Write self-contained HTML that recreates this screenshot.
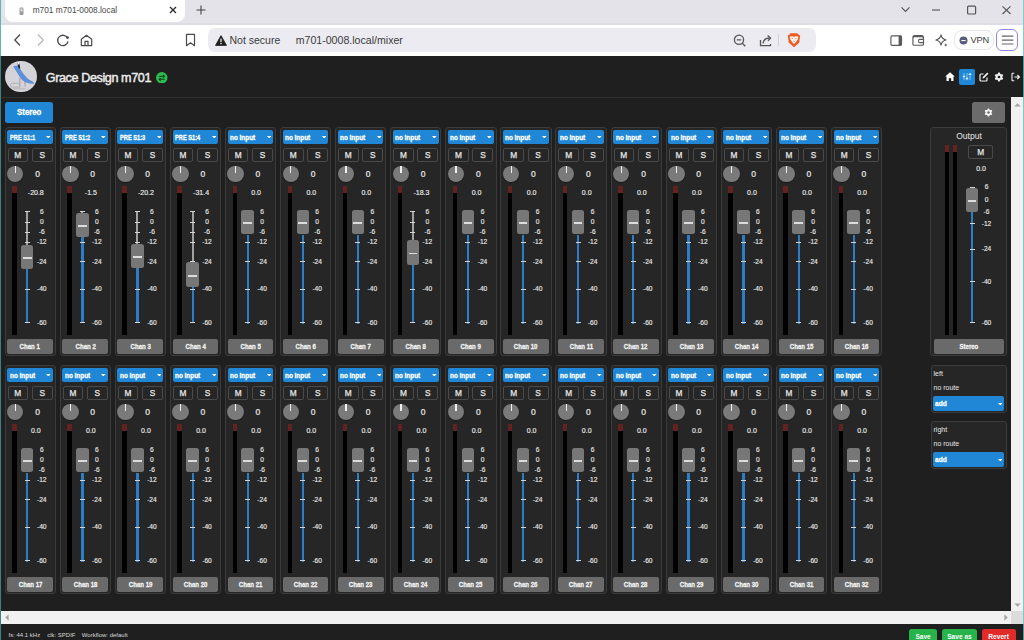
<!DOCTYPE html>
<html><head><meta charset="utf-8">
<style>
*{box-sizing:border-box;margin:0;padding:0}
html,body{width:1024px;height:640px;overflow:hidden;background:#1f1f1f;font-family:"Liberation Sans",sans-serif}
.a{position:absolute}
#tabbar{position:absolute;left:0;top:0;width:1024px;height:24.5px;background:#e4e3e9;border-bottom:2.2px solid #dedde3}
#toolbar{position:absolute;left:0;top:24.5px;width:1024px;height:31.5px;background:#fff}
#tab{position:absolute;left:5px;top:-8px;width:179.5px;height:30.4px;background:#fff;border-radius:8px}
#page{position:absolute;left:1px;top:56px;width:1022px;height:584px;background:#1f1f1f}
.edge{position:absolute;top:0;width:1px;height:640px;background:#3c8081}
.st{position:absolute;width:51.3px;height:229.2px;border:1px solid #3b3b3b;border-radius:3px;background:#262626}
.sel{position:absolute;width:45.6px;height:14.5px;background:#1f87d6;border-radius:2px;color:#fff;font-weight:bold;font-size:7px;line-height:15.6px;padding-left:2.3px;white-space:nowrap}
.sel .car{position:absolute;right:1.9px;top:6.4px}
.ms{position:absolute;width:20.5px;height:13.5px;border:1px solid #4a4a4a;border-radius:2px;color:#e8e8e8;font-size:8.3px;line-height:12.6px;text-align:center;-webkit-text-stroke:0.25px #e8e8e8}
.kn{position:absolute;width:16.4px;height:16.4px;border-radius:50%;background:#7a7a7a;box-shadow:0 0.5px 1px rgba(0,0,0,0.6)}
.kn i{position:absolute;left:7.6px;top:0.3px;width:1.3px;height:7.5px;background:#f0f0f0}
.v0{position:absolute;width:20px;text-align:center;color:#ececec;font-size:8.5px;line-height:10px;-webkit-text-stroke:0.2px #ececec}
.vv{position:absolute;width:30px;text-align:center;color:#ececec;font-size:7px;line-height:9px;-webkit-text-stroke:0.15px #ececec}
.mt{position:absolute;width:4.4px;height:148.9px;background:linear-gradient(#622222 0,#622222 7.2px,#000 7.2px)}
.tg{position:absolute;width:2px;background:#a2a2a2}
.tb{position:absolute;width:2.2px;background:#2a7dc6}
.tk{position:absolute;width:5px;height:1.1px;background:#d4d4d4}
.lb{position:absolute;width:20px;text-align:center;color:#e8e8e8;font-size:6.6px;line-height:9px;-webkit-text-stroke:0.15px #e8e8e8}
.hd{position:absolute;width:12.4px;height:24.4px;border-radius:2.5px;background:#777}
.hd i{position:absolute;left:1.9px;top:12.3px;width:8.6px;height:1.8px;background:#dcdcdc}
.nm{position:absolute;width:45.75px;height:14.8px;border-radius:2px;background:#6a6a6a;color:#f2f2f2;font-weight:bold;font-size:7px;line-height:15.6px;text-align:center}
.nm span{display:inline-block;transform:scaleX(0.865);-webkit-text-stroke:0.3px #f2f2f2}
.sel span{display:inline-block;transform-origin:0 50%;transform:scaleX(0.913);-webkit-text-stroke:0.3px #fff}
.sel span.pre{transform:scaleX(0.81)}
.otl{position:absolute;left:945px;top:131px;width:48px;text-align:center;color:#e6e6e6;font-size:8.5px;line-height:10px}
.rt{position:absolute;color:#e6e6e6;font-size:7px;line-height:10px}
.ft{position:absolute;top:631px;color:#d8d8d8;font-size:6px;line-height:8px;white-space:nowrap}
.btn{position:absolute;top:628.5px;height:16px;border-radius:2.5px;color:#fff;font-weight:bold;font-size:6.6px;line-height:15px;text-align:center}
</style></head><body>
<div id="tabbar"></div>
<div id="tab"></div>
<svg class="a" style="left:18px;top:7px" width="7" height="9" viewBox="0 0 7 9"><rect x="1.5" y="0.5" width="4" height="7.5" rx="1.2" fill="#9a9a9a"/><rect x="2.3" y="1.5" width="2.4" height="3" fill="#d6d6d6"/></svg>
<div class="a" style="left:32.7px;top:4.3px;font-size:8.3px;line-height:12px;color:#474747;white-space:nowrap">m701 m701-0008.local</div>
<svg class="a" style="left:169px;top:6px" width="8" height="8" viewBox="0 0 8 8"><path d="M1 1L7 7M7 1L1 7" stroke="#2a2a2a" stroke-width="1.3"/></svg>
<svg class="a" style="left:196px;top:5px" width="10" height="10" viewBox="0 0 10 10"><path d="M5 0.5V9.5M0.5 5H9.5" stroke="#444" stroke-width="1.1"/></svg>
<svg class="a" style="left:900px;top:6px" width="11" height="7" viewBox="0 0 11 7"><path d="M1.5 1.3L5.5 5.3L9.5 1.3" stroke="#555" stroke-width="1.2" fill="none"/></svg>
<svg class="a" style="left:931px;top:9px" width="10" height="2" viewBox="0 0 10 2"><path d="M1 1H9" stroke="#555" stroke-width="1.1"/></svg>
<svg class="a" style="left:966px;top:5px" width="11" height="10" viewBox="0 0 11 10"><rect x="1.6" y="1.2" width="8" height="7.8" rx="1" stroke="#555" stroke-width="1.2" fill="none"/></svg>
<svg class="a" style="left:1001px;top:5px" width="11" height="10" viewBox="0 0 11 10"><path d="M1.5 1.3L9.5 9M9.5 1.3L1.5 9" stroke="#555" stroke-width="1.1"/></svg>
<div id="toolbar"></div>
<svg class="a" style="left:13px;top:33px" width="9" height="14" viewBox="0 0 9 14"><path d="M7 1.5L1.8 7L7 12.5" stroke="#4a4a4a" stroke-width="1.3" fill="none"/></svg>
<svg class="a" style="left:36px;top:33px" width="9" height="14" viewBox="0 0 9 14"><path d="M2 1.5L7.2 7L2 12.5" stroke="#b8b8b8" stroke-width="1.3" fill="none"/></svg>
<svg class="a" style="left:56px;top:33px" width="14" height="14" viewBox="0 0 14 14"><path d="M11.6 5.2A5.2 5.2 0 1 0 12 8.5" stroke="#4a4a4a" stroke-width="1.3" fill="none"/><circle cx="11.5" cy="4.6" r="1.4" fill="#4a4a4a"/></svg>
<svg class="a" style="left:80px;top:34px" width="13" height="13" viewBox="0 0 13 13"><path d="M1.3 11.6V5.3L6.5 1.3L11.7 5.3V11.6H1.3Z M5 11.6V7.3H8V11.6" stroke="#4a4a4a" stroke-width="1.2" fill="none" stroke-linejoin="round"/></svg>
<svg class="a" style="left:185px;top:33px" width="11" height="14" viewBox="0 0 11 14"><path d="M1.5 1.3H9.5V12.7L5.5 9.8L1.5 12.7Z" stroke="#4a4a4a" stroke-width="1.2" fill="none" stroke-linejoin="round"/></svg>
<div class="a" style="left:208.3px;top:28px;width:607.5px;height:24px;border-radius:7px;background:#ecebf2"></div>
<svg class="a" style="left:215px;top:35px" width="12" height="11" viewBox="0 0 12 11"><path d="M6 0.6L11.5 10.4H0.5Z" fill="#202020" stroke="#202020" stroke-width="0.8" stroke-linejoin="round"/><rect x="5.4" y="3.6" width="1.2" height="3.6" fill="#fff"/><rect x="5.4" y="8" width="1.2" height="1.2" fill="#fff"/></svg>
<div class="a" style="left:229.5px;top:33px;font-size:10.5px;line-height:14px;color:#3a3a3a;white-space:nowrap">Not secure</div>
<div class="a" style="left:295.7px;top:33px;font-size:10.6px;line-height:14px;color:#3a3a3a;white-space:nowrap">m701-0008.local/mixer</div>
<svg class="a" style="left:733px;top:34px" width="14" height="14" viewBox="0 0 14 14"><circle cx="6" cy="5.8" r="4.6" stroke="#555" stroke-width="1.3" fill="none"/><path d="M3.8 5.8H8.2M9.3 9.2L12.3 12.2" stroke="#555" stroke-width="1.3"/></svg>
<svg class="a" style="left:759px;top:34px" width="14" height="13" viewBox="0 0 14 13"><path d="M1.5 6V11.7H11.5V10" stroke="#555" stroke-width="1.3" fill="none" stroke-linejoin="round"/><path d="M4 9.5C4.5 6 7 4 10.5 4" stroke="#555" stroke-width="1.3" fill="none"/><path d="M8.6 1.5L11.6 4L9 6.8" stroke="#555" stroke-width="1.3" fill="none" stroke-linejoin="round"/></svg>
<div class="a" style="left:778px;top:34.3px;width:1px;height:11.7px;background:#cfcfd6"></div>
<svg class="a" style="left:786.5px;top:33px" width="14" height="15" viewBox="0 0 14 15"><path d="M3.3 0.3H10.3L11.8 1.8L13.2 2.6L12.9 4.2L12.3 9.6L7 14.2L1.7 9.6L1.1 4.2L0.8 2.6L2.2 1.8Z" fill="#ef5a1f"/><path d="M2.6 3.6L5 3.2L7 3.8L9 3.2L11.4 3.6L10.6 6.8L8.5 9.6L7 10.9L5.5 9.6L3.4 6.8Z" fill="#fdf3ec"/><path d="M4.6 5.2L6 5.6M9.4 5.2L8 5.6M6.2 8L7 8.6L7.8 8" stroke="#ef7a4a" stroke-width="0.7" fill="none"/></svg>
<svg class="a" style="left:888.5px;top:33.5px" width="14" height="13" viewBox="0 0 14 13"><rect x="1.9" y="1.8" width="10.6" height="9.6" rx="1.2" stroke="#5a5a5a" stroke-width="1.15" fill="none"/><rect x="9.6" y="1.8" width="2.9" height="9.6" fill="#5a5a5a"/></svg>
<svg class="a" style="left:911px;top:33.5px" width="14" height="13" viewBox="0 0 14 13"><path d="M2.2 3.6V2.9C2.2 2.2 2.7 1.8 3.3 1.8H11C11.7 1.8 12.1 2.3 12.1 2.9V3.6" stroke="#5a5a5a" stroke-width="1.4" fill="none"/><rect x="1.9" y="2.6" width="10.6" height="8.6" rx="1.3" stroke="#5a5a5a" stroke-width="1.15" fill="none"/><path d="M12.5 5.4H8.8C8 5.4 7.6 5.9 7.6 6.6V7.4C7.6 8.1 8 8.6 8.8 8.6H12.5" stroke="#5a5a5a" stroke-width="1.1" fill="none"/></svg>
<svg class="a" style="left:935px;top:33.5px" width="13" height="13" viewBox="0 0 13 13"><path d="M6 0.9Q6.9 5.1 11.1 6Q6.9 6.9 6 11.1Q5.1 6.9 0.9 6Q5.1 5.1 6 0.9Z" stroke="#555" stroke-width="1.1" fill="none" stroke-linejoin="round"/><path d="M10.8 9.2L11.4 10.4L12.6 11L11.4 11.6L10.8 12.8L10.2 11.6L9 11L10.2 10.4Z" fill="#555"/></svg>
<div class="a" style="left:953.8px;top:29.5px;width:40.2px;height:20.4px;border:1px solid #e6e6ea;border-radius:8px;background:#fff"></div>
<svg class="a" style="left:959px;top:35.5px" width="9" height="9" viewBox="0 0 9 9"><circle cx="4.5" cy="4.5" r="4" fill="#575d7b"/><rect x="2.4" y="4" width="4.2" height="1.1" fill="#fff"/></svg>
<div class="a" style="left:970.5px;top:34px;font-size:9.3px;line-height:12px;color:#3a3a3a;letter-spacing:-0.2px">VPN</div>
<div class="a" style="left:996px;top:28.5px;width:21.6px;height:22.1px;border:1.5px solid #8d86e6;border-radius:6px;background:#fff"></div>
<svg class="a" style="left:1000.5px;top:35px" width="13" height="10" viewBox="0 0 13 10"><path d="M0.8 1.1H12.4M0.8 5.1H12.4M0.8 9H12.4" stroke="#666" stroke-width="1.1"/></svg>

<div id="page"></div>
<!-- header -->
<div class="a" style="left:5px;top:60.8px;width:31.5px;height:31.5px;border-radius:50%;background:#d4d4d8;overflow:hidden">
<svg width="31.5" height="31.5" viewBox="0 0 31.5 31.5"><path d="M8 5.3L12.8 4.5L14.9 7.2L17.1 10.9L20.3 15.1L23.4 18.3L27.7 20.5L29.3 22L28.8 22.8L24.5 22.6L20.3 21.3L17.1 18.9L14.9 16.2L12.3 12L9.6 7.7Z" fill="#5d8fda"/><path d="M12.6 2.3L14.6 2.4L15.2 7.4L13.8 7.6L13 5.2Z" fill="#1b2638"/><path d="M12.8 1.5L14.5 1.6L14.4 3.4L13 3.4Z" fill="#f4f4f4"/><path d="M14.9 17L14.9 25.6M19.8 20.5L20.2 25.6" stroke="#8e8e94" stroke-width="0.8" fill="none"/><path d="M14.5 22.3H7C6 22.3 5.5 23 5.5 24.2C5.5 25.4 6 26.1 7 26.1H15.5" stroke="#a0a0a6" stroke-width="0.7" fill="none"/><path d="M7.5 27.8H20.5" stroke="#a8a8ae" stroke-width="0.7"/></svg>
</div>
<div class="a" style="left:45.8px;top:71px;font-size:12.6px;line-height:15px;font-weight:normal;color:#ececec;letter-spacing:-0.4px;white-space:nowrap;-webkit-text-stroke:0.45px #ececec">Grace Design m701</div>
<svg class="a" style="left:156.3px;top:71.8px" width="11.6" height="11.6" viewBox="0 0 12.4 12.4"><circle cx="6.2" cy="6.2" r="6.1" fill="#2cbd4e"/><path d="M3 4.6H9M7.4 3L9 4.6L7.4 6.2M9.4 7.8H3.4M5 6.2L3.4 7.8L5 9.4" stroke="#0f3d1c" stroke-width="1.1" fill="none"/></svg>
<svg class="a" style="left:944.7px;top:72px" width="10" height="9.2" viewBox="0 0 10 9.2"><path d="M5 0.3L9.8 4.6H8.5V9H6.2V6.3H3.8V9H1.5V4.6H0.2Z" fill="#fff"/></svg>
<div class="a" style="left:958.9px;top:68.6px;width:16.4px;height:16.4px;border-radius:2px;background:#1f87d6"></div>
<svg class="a" style="left:962px;top:72px" width="10" height="10" viewBox="0 0 10 10"><path d="M2 1V8.2M5 1V8.2M8 1V8.2" stroke="#9fd0f5" stroke-width="1" opacity="0.8"/><rect x="0.7" y="3.8" width="2.6" height="1.5" rx="0.6" fill="#d8f0ff"/><rect x="3.7" y="5.8" width="2.6" height="1.5" rx="0.6" fill="#d8f0ff"/><rect x="6.7" y="1.5" width="2.6" height="1.5" rx="0.6" fill="#d8f0ff"/></svg>
<svg class="a" style="left:978.5px;top:71.5px" width="10" height="10" viewBox="0 0 10 10"><path d="M4.5 2H2C1.4 2 1 2.4 1 3V8C1 8.6 1.4 9 2 9H7C7.6 9 8 8.6 8 8V5.5" stroke="#f0f0f0" stroke-width="1.2" fill="none"/><path d="M8.2 0.6L9.4 1.8L5 6.2L3.5 6.5L3.8 5Z" fill="#f0f0f0"/></svg>
<svg class="a" style="left:994.3px;top:71.7px" width="10" height="10" viewBox="0 0 10 10"><path d="M3.45 2.32L4.30 0.56L5.70 0.56L6.55 2.32L8.50 2.17L9.20 3.39L8.10 5.00L9.20 6.61L8.50 7.83L6.55 7.68L5.70 9.44L4.30 9.44L3.45 7.68L1.50 7.83L0.80 6.61L1.90 5.00L0.80 3.39L1.50 2.17Z" fill="#f0f0f0"/><circle cx="5" cy="5" r="1.35" fill="#1f1f1f"/></svg>
<svg class="a" style="left:1011.2px;top:72px" width="10" height="10" viewBox="0 0 10 10"><path d="M3.3 1.2H1.6C1.2 1.2 1 1.5 1 1.8V8.2C1 8.5 1.2 8.8 1.6 8.8H3.3" stroke="#f0f0f0" stroke-width="1.1" fill="none"/><path d="M3.4 5H8.3M6.3 3L8.4 5L6.3 7" stroke="#f0f0f0" stroke-width="1.2" fill="none"/></svg>
<div class="a" style="left:1px;top:97.2px;width:1010px;height:1px;background:#2e3030"></div>
<div class="a" style="left:5px;top:101.5px;width:48.2px;height:21.3px;border-radius:2.5px;background:#1f87d6;color:#fff;font-weight:bold;font-size:8.5px;line-height:21.3px;text-align:center"><span style="display:inline-block;transform:scaleX(0.92);-webkit-text-stroke:0.3px #fff">Stereo</span></div>
<div class="a" style="left:972.2px;top:101.6px;width:32.6px;height:21.2px;border-radius:2.5px;background:#6b6b6b"></div>
<svg class="a" style="left:984px;top:107.5px" width="9" height="9" viewBox="0 0 10 10"><path d="M3.45 2.32L4.30 0.56L5.70 0.56L6.55 2.32L8.50 2.17L9.20 3.39L8.10 5.00L9.20 6.61L8.50 7.83L6.55 7.68L5.70 9.44L4.30 9.44L3.45 7.68L1.50 7.83L0.80 6.61L1.90 5.00L0.80 3.39L1.50 2.17Z" fill="#f4f4f4"/><circle cx="5" cy="5" r="1.35" fill="#6b6b6b"/></svg>
<div class="st" style="left:4.55px;top:127.3px"></div>
<div class="sel" style="left:7.3px;top:129.5px"><span class="pre">PRE S1:1</span><svg class="car" width="4.6" height="2.6" viewBox="0 0 4.6 2.6"><path d="M0 0.1H4.6L2.3 2.5Z" fill="#fff"/></svg></div>
<div class="ms" style="left:7.55px;top:148px">M</div>
<div class="ms" style="left:31.75px;top:148px;width:21px">S</div>
<div class="kn" style="left:7.1px;top:165.7px"><i></i></div>
<div class="v0" style="left:27.55px;top:168.7px">0</div>
<div class="mt" style="left:12.15px;top:185.8px"></div>
<div class="vv" style="left:20.8px;top:188.1px">-20.8</div>
<div class="tg" style="left:26.25px;top:212px;height:32.52px"></div>
<div class="tb" style="left:26.25px;top:268.92px;height:54.58px"></div>
<div class="tk" style="left:24.75px;top:211.4px"></div>
<div class="lb" style="left:31.75px;top:206.7px">6</div>
<div class="tk" style="left:24.75px;top:221.7px"></div>
<div class="lb" style="left:31.75px;top:217px">0</div>
<div class="tk" style="left:24.75px;top:231.6px"></div>
<div class="lb" style="left:31.75px;top:226.9px">-6</div>
<div class="tk" style="left:24.75px;top:241.6px"></div>
<div class="lb" style="left:31.75px;top:236.9px">-12</div>
<div class="tk" style="left:24.75px;top:261.4px"></div>
<div class="lb" style="left:31.75px;top:256.7px">-24</div>
<div class="tk" style="left:24.75px;top:288.8px"></div>
<div class="lb" style="left:31.75px;top:284.1px">-40</div>
<div class="tk" style="left:24.75px;top:322.4px"></div>
<div class="lb" style="left:31.75px;top:317.7px">-60</div>
<div class="hd" style="left:21.05px;top:244.52px"><i></i></div>
<div class="nm" style="left:7.25px;top:339.3px"><span>Chan 1</span></div>
<div class="st" style="left:59.64px;top:127.3px"></div>
<div class="sel" style="left:62.39px;top:129.5px"><span class="pre">PRE S1:2</span><svg class="car" width="4.6" height="2.6" viewBox="0 0 4.6 2.6"><path d="M0 0.1H4.6L2.3 2.5Z" fill="#fff"/></svg></div>
<div class="ms" style="left:62.64px;top:148px">M</div>
<div class="ms" style="left:86.84px;top:148px;width:21px">S</div>
<div class="kn" style="left:62.19px;top:165.7px"><i></i></div>
<div class="v0" style="left:82.64px;top:168.7px">0</div>
<div class="mt" style="left:67.24px;top:185.8px"></div>
<div class="vv" style="left:75.89px;top:188.1px">-1.5</div>
<div class="tg" style="left:81.34px;top:212px;height:0.58px"></div>
<div class="tb" style="left:81.34px;top:236.97px;height:86.53px"></div>
<div class="tk" style="left:79.84px;top:211.4px"></div>
<div class="lb" style="left:86.84px;top:206.7px">6</div>
<div class="tk" style="left:79.84px;top:221.7px"></div>
<div class="lb" style="left:86.84px;top:217px">0</div>
<div class="tk" style="left:79.84px;top:231.6px"></div>
<div class="lb" style="left:86.84px;top:226.9px">-6</div>
<div class="tk" style="left:79.84px;top:241.6px"></div>
<div class="lb" style="left:86.84px;top:236.9px">-12</div>
<div class="tk" style="left:79.84px;top:261.4px"></div>
<div class="lb" style="left:86.84px;top:256.7px">-24</div>
<div class="tk" style="left:79.84px;top:288.8px"></div>
<div class="lb" style="left:86.84px;top:284.1px">-40</div>
<div class="tk" style="left:79.84px;top:322.4px"></div>
<div class="lb" style="left:86.84px;top:317.7px">-60</div>
<div class="hd" style="left:76.14px;top:212.58px"><i></i></div>
<div class="nm" style="left:62.34px;top:339.3px"><span>Chan 2</span></div>
<div class="st" style="left:114.73px;top:127.3px"></div>
<div class="sel" style="left:117.48px;top:129.5px"><span class="pre">PRE S1:3</span><svg class="car" width="4.6" height="2.6" viewBox="0 0 4.6 2.6"><path d="M0 0.1H4.6L2.3 2.5Z" fill="#fff"/></svg></div>
<div class="ms" style="left:117.73px;top:148px">M</div>
<div class="ms" style="left:141.93px;top:148px;width:21px">S</div>
<div class="kn" style="left:117.28px;top:165.7px"><i></i></div>
<div class="v0" style="left:137.73px;top:168.7px">0</div>
<div class="mt" style="left:122.33px;top:185.8px"></div>
<div class="vv" style="left:130.98px;top:188.1px">-20.2</div>
<div class="tg" style="left:136.43px;top:212px;height:31.53px"></div>
<div class="tb" style="left:136.43px;top:267.93px;height:55.57px"></div>
<div class="tk" style="left:134.93px;top:211.4px"></div>
<div class="lb" style="left:141.93px;top:206.7px">6</div>
<div class="tk" style="left:134.93px;top:221.7px"></div>
<div class="lb" style="left:141.93px;top:217px">0</div>
<div class="tk" style="left:134.93px;top:231.6px"></div>
<div class="lb" style="left:141.93px;top:226.9px">-6</div>
<div class="tk" style="left:134.93px;top:241.6px"></div>
<div class="lb" style="left:141.93px;top:236.9px">-12</div>
<div class="tk" style="left:134.93px;top:261.4px"></div>
<div class="lb" style="left:141.93px;top:256.7px">-24</div>
<div class="tk" style="left:134.93px;top:288.8px"></div>
<div class="lb" style="left:141.93px;top:284.1px">-40</div>
<div class="tk" style="left:134.93px;top:322.4px"></div>
<div class="lb" style="left:141.93px;top:317.7px">-60</div>
<div class="hd" style="left:131.23px;top:243.53px"><i></i></div>
<div class="nm" style="left:117.43px;top:339.3px"><span>Chan 3</span></div>
<div class="st" style="left:169.82px;top:127.3px"></div>
<div class="sel" style="left:172.57px;top:129.5px"><span class="pre">PRE S1:4</span><svg class="car" width="4.6" height="2.6" viewBox="0 0 4.6 2.6"><path d="M0 0.1H4.6L2.3 2.5Z" fill="#fff"/></svg></div>
<div class="ms" style="left:172.82px;top:148px">M</div>
<div class="ms" style="left:197.02px;top:148px;width:21px">S</div>
<div class="kn" style="left:172.37px;top:165.7px"><i></i></div>
<div class="v0" style="left:192.82px;top:168.7px">0</div>
<div class="mt" style="left:177.42px;top:185.8px"></div>
<div class="vv" style="left:186.07px;top:188.1px">-31.4</div>
<div class="tg" style="left:191.52px;top:212px;height:50.47px"></div>
<div class="tb" style="left:191.52px;top:286.87px;height:36.63px"></div>
<div class="tk" style="left:190.02px;top:211.4px"></div>
<div class="lb" style="left:197.02px;top:206.7px">6</div>
<div class="tk" style="left:190.02px;top:221.7px"></div>
<div class="lb" style="left:197.02px;top:217px">0</div>
<div class="tk" style="left:190.02px;top:231.6px"></div>
<div class="lb" style="left:197.02px;top:226.9px">-6</div>
<div class="tk" style="left:190.02px;top:241.6px"></div>
<div class="lb" style="left:197.02px;top:236.9px">-12</div>
<div class="tk" style="left:190.02px;top:261.4px"></div>
<div class="lb" style="left:197.02px;top:256.7px">-24</div>
<div class="tk" style="left:190.02px;top:288.8px"></div>
<div class="lb" style="left:197.02px;top:284.1px">-40</div>
<div class="tk" style="left:190.02px;top:322.4px"></div>
<div class="lb" style="left:197.02px;top:317.7px">-60</div>
<div class="hd" style="left:186.32px;top:262.47px"><i></i></div>
<div class="nm" style="left:172.52px;top:339.3px"><span>Chan 4</span></div>
<div class="st" style="left:224.91px;top:127.3px"></div>
<div class="sel" style="left:227.66px;top:129.5px"><span>no input</span><svg class="car" width="4.6" height="2.6" viewBox="0 0 4.6 2.6"><path d="M0 0.1H4.6L2.3 2.5Z" fill="#fff"/></svg></div>
<div class="ms" style="left:227.91px;top:148px">M</div>
<div class="ms" style="left:252.11px;top:148px;width:21px">S</div>
<div class="kn" style="left:227.46px;top:165.7px"><i></i></div>
<div class="v0" style="left:247.91px;top:168.7px">0</div>
<div class="mt" style="left:232.51px;top:185.8px"></div>
<div class="vv" style="left:241.16px;top:188.1px">0.0</div>
<div class="tb" style="left:246.61px;top:234.5px;height:89px"></div>
<div class="tk" style="left:245.11px;top:211.4px"></div>
<div class="lb" style="left:252.11px;top:206.7px">6</div>
<div class="tk" style="left:245.11px;top:221.7px"></div>
<div class="lb" style="left:252.11px;top:217px">0</div>
<div class="tk" style="left:245.11px;top:231.6px"></div>
<div class="lb" style="left:252.11px;top:226.9px">-6</div>
<div class="tk" style="left:245.11px;top:241.6px"></div>
<div class="lb" style="left:252.11px;top:236.9px">-12</div>
<div class="tk" style="left:245.11px;top:261.4px"></div>
<div class="lb" style="left:252.11px;top:256.7px">-24</div>
<div class="tk" style="left:245.11px;top:288.8px"></div>
<div class="lb" style="left:252.11px;top:284.1px">-40</div>
<div class="tk" style="left:245.11px;top:322.4px"></div>
<div class="lb" style="left:252.11px;top:317.7px">-60</div>
<div class="hd" style="left:241.41px;top:210.1px"><i></i></div>
<div class="nm" style="left:227.61px;top:339.3px"><span>Chan 5</span></div>
<div class="st" style="left:280px;top:127.3px"></div>
<div class="sel" style="left:282.75px;top:129.5px"><span>no input</span><svg class="car" width="4.6" height="2.6" viewBox="0 0 4.6 2.6"><path d="M0 0.1H4.6L2.3 2.5Z" fill="#fff"/></svg></div>
<div class="ms" style="left:283px;top:148px">M</div>
<div class="ms" style="left:307.2px;top:148px;width:21px">S</div>
<div class="kn" style="left:282.55px;top:165.7px"><i></i></div>
<div class="v0" style="left:303px;top:168.7px">0</div>
<div class="mt" style="left:287.6px;top:185.8px"></div>
<div class="vv" style="left:296.25px;top:188.1px">0.0</div>
<div class="tb" style="left:301.7px;top:234.5px;height:89px"></div>
<div class="tk" style="left:300.2px;top:211.4px"></div>
<div class="lb" style="left:307.2px;top:206.7px">6</div>
<div class="tk" style="left:300.2px;top:221.7px"></div>
<div class="lb" style="left:307.2px;top:217px">0</div>
<div class="tk" style="left:300.2px;top:231.6px"></div>
<div class="lb" style="left:307.2px;top:226.9px">-6</div>
<div class="tk" style="left:300.2px;top:241.6px"></div>
<div class="lb" style="left:307.2px;top:236.9px">-12</div>
<div class="tk" style="left:300.2px;top:261.4px"></div>
<div class="lb" style="left:307.2px;top:256.7px">-24</div>
<div class="tk" style="left:300.2px;top:288.8px"></div>
<div class="lb" style="left:307.2px;top:284.1px">-40</div>
<div class="tk" style="left:300.2px;top:322.4px"></div>
<div class="lb" style="left:307.2px;top:317.7px">-60</div>
<div class="hd" style="left:296.5px;top:210.1px"><i></i></div>
<div class="nm" style="left:282.7px;top:339.3px"><span>Chan 6</span></div>
<div class="st" style="left:335.09px;top:127.3px"></div>
<div class="sel" style="left:337.84px;top:129.5px"><span>no input</span><svg class="car" width="4.6" height="2.6" viewBox="0 0 4.6 2.6"><path d="M0 0.1H4.6L2.3 2.5Z" fill="#fff"/></svg></div>
<div class="ms" style="left:338.09px;top:148px">M</div>
<div class="ms" style="left:362.29px;top:148px;width:21px">S</div>
<div class="kn" style="left:337.64px;top:165.7px"><i></i></div>
<div class="v0" style="left:358.09px;top:168.7px">0</div>
<div class="mt" style="left:342.69px;top:185.8px"></div>
<div class="vv" style="left:351.34px;top:188.1px">0.0</div>
<div class="tb" style="left:356.79px;top:234.5px;height:89px"></div>
<div class="tk" style="left:355.29px;top:211.4px"></div>
<div class="lb" style="left:362.29px;top:206.7px">6</div>
<div class="tk" style="left:355.29px;top:221.7px"></div>
<div class="lb" style="left:362.29px;top:217px">0</div>
<div class="tk" style="left:355.29px;top:231.6px"></div>
<div class="lb" style="left:362.29px;top:226.9px">-6</div>
<div class="tk" style="left:355.29px;top:241.6px"></div>
<div class="lb" style="left:362.29px;top:236.9px">-12</div>
<div class="tk" style="left:355.29px;top:261.4px"></div>
<div class="lb" style="left:362.29px;top:256.7px">-24</div>
<div class="tk" style="left:355.29px;top:288.8px"></div>
<div class="lb" style="left:362.29px;top:284.1px">-40</div>
<div class="tk" style="left:355.29px;top:322.4px"></div>
<div class="lb" style="left:362.29px;top:317.7px">-60</div>
<div class="hd" style="left:351.59px;top:210.1px"><i></i></div>
<div class="nm" style="left:337.79px;top:339.3px"><span>Chan 7</span></div>
<div class="st" style="left:390.18px;top:127.3px"></div>
<div class="sel" style="left:392.93px;top:129.5px"><span>no input</span><svg class="car" width="4.6" height="2.6" viewBox="0 0 4.6 2.6"><path d="M0 0.1H4.6L2.3 2.5Z" fill="#fff"/></svg></div>
<div class="ms" style="left:393.18px;top:148px">M</div>
<div class="ms" style="left:417.38px;top:148px;width:21px">S</div>
<div class="kn" style="left:392.73px;top:165.7px"><i></i></div>
<div class="v0" style="left:413.18px;top:168.7px">0</div>
<div class="mt" style="left:397.78px;top:185.8px"></div>
<div class="vv" style="left:406.43px;top:188.1px">-18.3</div>
<div class="tg" style="left:411.88px;top:212px;height:28.4px"></div>
<div class="tb" style="left:411.88px;top:264.8px;height:58.7px"></div>
<div class="tk" style="left:410.38px;top:211.4px"></div>
<div class="lb" style="left:417.38px;top:206.7px">6</div>
<div class="tk" style="left:410.38px;top:221.7px"></div>
<div class="lb" style="left:417.38px;top:217px">0</div>
<div class="tk" style="left:410.38px;top:231.6px"></div>
<div class="lb" style="left:417.38px;top:226.9px">-6</div>
<div class="tk" style="left:410.38px;top:241.6px"></div>
<div class="lb" style="left:417.38px;top:236.9px">-12</div>
<div class="tk" style="left:410.38px;top:261.4px"></div>
<div class="lb" style="left:417.38px;top:256.7px">-24</div>
<div class="tk" style="left:410.38px;top:288.8px"></div>
<div class="lb" style="left:417.38px;top:284.1px">-40</div>
<div class="tk" style="left:410.38px;top:322.4px"></div>
<div class="lb" style="left:417.38px;top:317.7px">-60</div>
<div class="hd" style="left:406.68px;top:240.4px"><i></i></div>
<div class="nm" style="left:392.88px;top:339.3px"><span>Chan 8</span></div>
<div class="st" style="left:445.27px;top:127.3px"></div>
<div class="sel" style="left:448.02px;top:129.5px"><span>no input</span><svg class="car" width="4.6" height="2.6" viewBox="0 0 4.6 2.6"><path d="M0 0.1H4.6L2.3 2.5Z" fill="#fff"/></svg></div>
<div class="ms" style="left:448.27px;top:148px">M</div>
<div class="ms" style="left:472.47px;top:148px;width:21px">S</div>
<div class="kn" style="left:447.82px;top:165.7px"><i></i></div>
<div class="v0" style="left:468.27px;top:168.7px">0</div>
<div class="mt" style="left:452.87px;top:185.8px"></div>
<div class="vv" style="left:461.52px;top:188.1px">0.0</div>
<div class="tb" style="left:466.97px;top:234.5px;height:89px"></div>
<div class="tk" style="left:465.47px;top:211.4px"></div>
<div class="lb" style="left:472.47px;top:206.7px">6</div>
<div class="tk" style="left:465.47px;top:221.7px"></div>
<div class="lb" style="left:472.47px;top:217px">0</div>
<div class="tk" style="left:465.47px;top:231.6px"></div>
<div class="lb" style="left:472.47px;top:226.9px">-6</div>
<div class="tk" style="left:465.47px;top:241.6px"></div>
<div class="lb" style="left:472.47px;top:236.9px">-12</div>
<div class="tk" style="left:465.47px;top:261.4px"></div>
<div class="lb" style="left:472.47px;top:256.7px">-24</div>
<div class="tk" style="left:465.47px;top:288.8px"></div>
<div class="lb" style="left:472.47px;top:284.1px">-40</div>
<div class="tk" style="left:465.47px;top:322.4px"></div>
<div class="lb" style="left:472.47px;top:317.7px">-60</div>
<div class="hd" style="left:461.77px;top:210.1px"><i></i></div>
<div class="nm" style="left:447.97px;top:339.3px"><span>Chan 9</span></div>
<div class="st" style="left:500.36px;top:127.3px"></div>
<div class="sel" style="left:503.11px;top:129.5px"><span>no input</span><svg class="car" width="4.6" height="2.6" viewBox="0 0 4.6 2.6"><path d="M0 0.1H4.6L2.3 2.5Z" fill="#fff"/></svg></div>
<div class="ms" style="left:503.36px;top:148px">M</div>
<div class="ms" style="left:527.56px;top:148px;width:21px">S</div>
<div class="kn" style="left:502.91px;top:165.7px"><i></i></div>
<div class="v0" style="left:523.36px;top:168.7px">0</div>
<div class="mt" style="left:507.96px;top:185.8px"></div>
<div class="vv" style="left:516.61px;top:188.1px">0.0</div>
<div class="tb" style="left:522.06px;top:234.5px;height:89px"></div>
<div class="tk" style="left:520.56px;top:211.4px"></div>
<div class="lb" style="left:527.56px;top:206.7px">6</div>
<div class="tk" style="left:520.56px;top:221.7px"></div>
<div class="lb" style="left:527.56px;top:217px">0</div>
<div class="tk" style="left:520.56px;top:231.6px"></div>
<div class="lb" style="left:527.56px;top:226.9px">-6</div>
<div class="tk" style="left:520.56px;top:241.6px"></div>
<div class="lb" style="left:527.56px;top:236.9px">-12</div>
<div class="tk" style="left:520.56px;top:261.4px"></div>
<div class="lb" style="left:527.56px;top:256.7px">-24</div>
<div class="tk" style="left:520.56px;top:288.8px"></div>
<div class="lb" style="left:527.56px;top:284.1px">-40</div>
<div class="tk" style="left:520.56px;top:322.4px"></div>
<div class="lb" style="left:527.56px;top:317.7px">-60</div>
<div class="hd" style="left:516.86px;top:210.1px"><i></i></div>
<div class="nm" style="left:503.06px;top:339.3px"><span>Chan 10</span></div>
<div class="st" style="left:555.45px;top:127.3px"></div>
<div class="sel" style="left:558.2px;top:129.5px"><span>no input</span><svg class="car" width="4.6" height="2.6" viewBox="0 0 4.6 2.6"><path d="M0 0.1H4.6L2.3 2.5Z" fill="#fff"/></svg></div>
<div class="ms" style="left:558.45px;top:148px">M</div>
<div class="ms" style="left:582.65px;top:148px;width:21px">S</div>
<div class="kn" style="left:558px;top:165.7px"><i></i></div>
<div class="v0" style="left:578.45px;top:168.7px">0</div>
<div class="mt" style="left:563.05px;top:185.8px"></div>
<div class="vv" style="left:571.7px;top:188.1px">0.0</div>
<div class="tb" style="left:577.15px;top:234.5px;height:89px"></div>
<div class="tk" style="left:575.65px;top:211.4px"></div>
<div class="lb" style="left:582.65px;top:206.7px">6</div>
<div class="tk" style="left:575.65px;top:221.7px"></div>
<div class="lb" style="left:582.65px;top:217px">0</div>
<div class="tk" style="left:575.65px;top:231.6px"></div>
<div class="lb" style="left:582.65px;top:226.9px">-6</div>
<div class="tk" style="left:575.65px;top:241.6px"></div>
<div class="lb" style="left:582.65px;top:236.9px">-12</div>
<div class="tk" style="left:575.65px;top:261.4px"></div>
<div class="lb" style="left:582.65px;top:256.7px">-24</div>
<div class="tk" style="left:575.65px;top:288.8px"></div>
<div class="lb" style="left:582.65px;top:284.1px">-40</div>
<div class="tk" style="left:575.65px;top:322.4px"></div>
<div class="lb" style="left:582.65px;top:317.7px">-60</div>
<div class="hd" style="left:571.95px;top:210.1px"><i></i></div>
<div class="nm" style="left:558.15px;top:339.3px"><span>Chan 11</span></div>
<div class="st" style="left:610.54px;top:127.3px"></div>
<div class="sel" style="left:613.29px;top:129.5px"><span>no input</span><svg class="car" width="4.6" height="2.6" viewBox="0 0 4.6 2.6"><path d="M0 0.1H4.6L2.3 2.5Z" fill="#fff"/></svg></div>
<div class="ms" style="left:613.54px;top:148px">M</div>
<div class="ms" style="left:637.74px;top:148px;width:21px">S</div>
<div class="kn" style="left:613.09px;top:165.7px"><i></i></div>
<div class="v0" style="left:633.54px;top:168.7px">0</div>
<div class="mt" style="left:618.14px;top:185.8px"></div>
<div class="vv" style="left:626.79px;top:188.1px">0.0</div>
<div class="tb" style="left:632.24px;top:234.5px;height:89px"></div>
<div class="tk" style="left:630.74px;top:211.4px"></div>
<div class="lb" style="left:637.74px;top:206.7px">6</div>
<div class="tk" style="left:630.74px;top:221.7px"></div>
<div class="lb" style="left:637.74px;top:217px">0</div>
<div class="tk" style="left:630.74px;top:231.6px"></div>
<div class="lb" style="left:637.74px;top:226.9px">-6</div>
<div class="tk" style="left:630.74px;top:241.6px"></div>
<div class="lb" style="left:637.74px;top:236.9px">-12</div>
<div class="tk" style="left:630.74px;top:261.4px"></div>
<div class="lb" style="left:637.74px;top:256.7px">-24</div>
<div class="tk" style="left:630.74px;top:288.8px"></div>
<div class="lb" style="left:637.74px;top:284.1px">-40</div>
<div class="tk" style="left:630.74px;top:322.4px"></div>
<div class="lb" style="left:637.74px;top:317.7px">-60</div>
<div class="hd" style="left:627.04px;top:210.1px"><i></i></div>
<div class="nm" style="left:613.24px;top:339.3px"><span>Chan 12</span></div>
<div class="st" style="left:665.63px;top:127.3px"></div>
<div class="sel" style="left:668.38px;top:129.5px"><span>no input</span><svg class="car" width="4.6" height="2.6" viewBox="0 0 4.6 2.6"><path d="M0 0.1H4.6L2.3 2.5Z" fill="#fff"/></svg></div>
<div class="ms" style="left:668.63px;top:148px">M</div>
<div class="ms" style="left:692.83px;top:148px;width:21px">S</div>
<div class="kn" style="left:668.18px;top:165.7px"><i></i></div>
<div class="v0" style="left:688.63px;top:168.7px">0</div>
<div class="mt" style="left:673.23px;top:185.8px"></div>
<div class="vv" style="left:681.88px;top:188.1px">0.0</div>
<div class="tb" style="left:687.33px;top:234.5px;height:89px"></div>
<div class="tk" style="left:685.83px;top:211.4px"></div>
<div class="lb" style="left:692.83px;top:206.7px">6</div>
<div class="tk" style="left:685.83px;top:221.7px"></div>
<div class="lb" style="left:692.83px;top:217px">0</div>
<div class="tk" style="left:685.83px;top:231.6px"></div>
<div class="lb" style="left:692.83px;top:226.9px">-6</div>
<div class="tk" style="left:685.83px;top:241.6px"></div>
<div class="lb" style="left:692.83px;top:236.9px">-12</div>
<div class="tk" style="left:685.83px;top:261.4px"></div>
<div class="lb" style="left:692.83px;top:256.7px">-24</div>
<div class="tk" style="left:685.83px;top:288.8px"></div>
<div class="lb" style="left:692.83px;top:284.1px">-40</div>
<div class="tk" style="left:685.83px;top:322.4px"></div>
<div class="lb" style="left:692.83px;top:317.7px">-60</div>
<div class="hd" style="left:682.13px;top:210.1px"><i></i></div>
<div class="nm" style="left:668.33px;top:339.3px"><span>Chan 13</span></div>
<div class="st" style="left:720.72px;top:127.3px"></div>
<div class="sel" style="left:723.47px;top:129.5px"><span>no input</span><svg class="car" width="4.6" height="2.6" viewBox="0 0 4.6 2.6"><path d="M0 0.1H4.6L2.3 2.5Z" fill="#fff"/></svg></div>
<div class="ms" style="left:723.72px;top:148px">M</div>
<div class="ms" style="left:747.92px;top:148px;width:21px">S</div>
<div class="kn" style="left:723.27px;top:165.7px"><i></i></div>
<div class="v0" style="left:743.72px;top:168.7px">0</div>
<div class="mt" style="left:728.32px;top:185.8px"></div>
<div class="vv" style="left:736.97px;top:188.1px">0.0</div>
<div class="tb" style="left:742.42px;top:234.5px;height:89px"></div>
<div class="tk" style="left:740.92px;top:211.4px"></div>
<div class="lb" style="left:747.92px;top:206.7px">6</div>
<div class="tk" style="left:740.92px;top:221.7px"></div>
<div class="lb" style="left:747.92px;top:217px">0</div>
<div class="tk" style="left:740.92px;top:231.6px"></div>
<div class="lb" style="left:747.92px;top:226.9px">-6</div>
<div class="tk" style="left:740.92px;top:241.6px"></div>
<div class="lb" style="left:747.92px;top:236.9px">-12</div>
<div class="tk" style="left:740.92px;top:261.4px"></div>
<div class="lb" style="left:747.92px;top:256.7px">-24</div>
<div class="tk" style="left:740.92px;top:288.8px"></div>
<div class="lb" style="left:747.92px;top:284.1px">-40</div>
<div class="tk" style="left:740.92px;top:322.4px"></div>
<div class="lb" style="left:747.92px;top:317.7px">-60</div>
<div class="hd" style="left:737.22px;top:210.1px"><i></i></div>
<div class="nm" style="left:723.42px;top:339.3px"><span>Chan 14</span></div>
<div class="st" style="left:775.81px;top:127.3px"></div>
<div class="sel" style="left:778.56px;top:129.5px"><span>no input</span><svg class="car" width="4.6" height="2.6" viewBox="0 0 4.6 2.6"><path d="M0 0.1H4.6L2.3 2.5Z" fill="#fff"/></svg></div>
<div class="ms" style="left:778.81px;top:148px">M</div>
<div class="ms" style="left:803.01px;top:148px;width:21px">S</div>
<div class="kn" style="left:778.36px;top:165.7px"><i></i></div>
<div class="v0" style="left:798.81px;top:168.7px">0</div>
<div class="mt" style="left:783.41px;top:185.8px"></div>
<div class="vv" style="left:792.06px;top:188.1px">0.0</div>
<div class="tb" style="left:797.51px;top:234.5px;height:89px"></div>
<div class="tk" style="left:796.01px;top:211.4px"></div>
<div class="lb" style="left:803.01px;top:206.7px">6</div>
<div class="tk" style="left:796.01px;top:221.7px"></div>
<div class="lb" style="left:803.01px;top:217px">0</div>
<div class="tk" style="left:796.01px;top:231.6px"></div>
<div class="lb" style="left:803.01px;top:226.9px">-6</div>
<div class="tk" style="left:796.01px;top:241.6px"></div>
<div class="lb" style="left:803.01px;top:236.9px">-12</div>
<div class="tk" style="left:796.01px;top:261.4px"></div>
<div class="lb" style="left:803.01px;top:256.7px">-24</div>
<div class="tk" style="left:796.01px;top:288.8px"></div>
<div class="lb" style="left:803.01px;top:284.1px">-40</div>
<div class="tk" style="left:796.01px;top:322.4px"></div>
<div class="lb" style="left:803.01px;top:317.7px">-60</div>
<div class="hd" style="left:792.31px;top:210.1px"><i></i></div>
<div class="nm" style="left:778.51px;top:339.3px"><span>Chan 15</span></div>
<div class="st" style="left:830.9px;top:127.3px"></div>
<div class="sel" style="left:833.65px;top:129.5px"><span>no input</span><svg class="car" width="4.6" height="2.6" viewBox="0 0 4.6 2.6"><path d="M0 0.1H4.6L2.3 2.5Z" fill="#fff"/></svg></div>
<div class="ms" style="left:833.9px;top:148px">M</div>
<div class="ms" style="left:858.1px;top:148px;width:21px">S</div>
<div class="kn" style="left:833.45px;top:165.7px"><i></i></div>
<div class="v0" style="left:853.9px;top:168.7px">0</div>
<div class="mt" style="left:838.5px;top:185.8px"></div>
<div class="vv" style="left:847.15px;top:188.1px">0.0</div>
<div class="tb" style="left:852.6px;top:234.5px;height:89px"></div>
<div class="tk" style="left:851.1px;top:211.4px"></div>
<div class="lb" style="left:858.1px;top:206.7px">6</div>
<div class="tk" style="left:851.1px;top:221.7px"></div>
<div class="lb" style="left:858.1px;top:217px">0</div>
<div class="tk" style="left:851.1px;top:231.6px"></div>
<div class="lb" style="left:858.1px;top:226.9px">-6</div>
<div class="tk" style="left:851.1px;top:241.6px"></div>
<div class="lb" style="left:858.1px;top:236.9px">-12</div>
<div class="tk" style="left:851.1px;top:261.4px"></div>
<div class="lb" style="left:858.1px;top:256.7px">-24</div>
<div class="tk" style="left:851.1px;top:288.8px"></div>
<div class="lb" style="left:858.1px;top:284.1px">-40</div>
<div class="tk" style="left:851.1px;top:322.4px"></div>
<div class="lb" style="left:858.1px;top:317.7px">-60</div>
<div class="hd" style="left:847.4px;top:210.1px"><i></i></div>
<div class="nm" style="left:833.6px;top:339.3px"><span>Chan 16</span></div>
<div class="st" style="left:4.55px;top:365.3px"></div>
<div class="sel" style="left:7.3px;top:367.5px"><span>no input</span><svg class="car" width="4.6" height="2.6" viewBox="0 0 4.6 2.6"><path d="M0 0.1H4.6L2.3 2.5Z" fill="#fff"/></svg></div>
<div class="ms" style="left:7.55px;top:386px">M</div>
<div class="ms" style="left:31.75px;top:386px;width:21px">S</div>
<div class="kn" style="left:7.1px;top:403.7px"><i></i></div>
<div class="v0" style="left:27.55px;top:406.7px">0</div>
<div class="mt" style="left:12.15px;top:423.8px"></div>
<div class="vv" style="left:20.8px;top:426.1px">0.0</div>
<div class="tb" style="left:26.25px;top:472.5px;height:89px"></div>
<div class="tk" style="left:24.75px;top:449.4px"></div>
<div class="lb" style="left:31.75px;top:444.7px">6</div>
<div class="tk" style="left:24.75px;top:459.7px"></div>
<div class="lb" style="left:31.75px;top:455px">0</div>
<div class="tk" style="left:24.75px;top:469.6px"></div>
<div class="lb" style="left:31.75px;top:464.9px">-6</div>
<div class="tk" style="left:24.75px;top:479.6px"></div>
<div class="lb" style="left:31.75px;top:474.9px">-12</div>
<div class="tk" style="left:24.75px;top:499.4px"></div>
<div class="lb" style="left:31.75px;top:494.7px">-24</div>
<div class="tk" style="left:24.75px;top:526.8px"></div>
<div class="lb" style="left:31.75px;top:522.1px">-40</div>
<div class="tk" style="left:24.75px;top:560.4px"></div>
<div class="lb" style="left:31.75px;top:555.7px">-60</div>
<div class="hd" style="left:21.05px;top:448.1px"><i></i></div>
<div class="nm" style="left:7.25px;top:577.3px"><span>Chan 17</span></div>
<div class="st" style="left:59.64px;top:365.3px"></div>
<div class="sel" style="left:62.39px;top:367.5px"><span>no input</span><svg class="car" width="4.6" height="2.6" viewBox="0 0 4.6 2.6"><path d="M0 0.1H4.6L2.3 2.5Z" fill="#fff"/></svg></div>
<div class="ms" style="left:62.64px;top:386px">M</div>
<div class="ms" style="left:86.84px;top:386px;width:21px">S</div>
<div class="kn" style="left:62.19px;top:403.7px"><i></i></div>
<div class="v0" style="left:82.64px;top:406.7px">0</div>
<div class="mt" style="left:67.24px;top:423.8px"></div>
<div class="vv" style="left:75.89px;top:426.1px">0.0</div>
<div class="tb" style="left:81.34px;top:472.5px;height:89px"></div>
<div class="tk" style="left:79.84px;top:449.4px"></div>
<div class="lb" style="left:86.84px;top:444.7px">6</div>
<div class="tk" style="left:79.84px;top:459.7px"></div>
<div class="lb" style="left:86.84px;top:455px">0</div>
<div class="tk" style="left:79.84px;top:469.6px"></div>
<div class="lb" style="left:86.84px;top:464.9px">-6</div>
<div class="tk" style="left:79.84px;top:479.6px"></div>
<div class="lb" style="left:86.84px;top:474.9px">-12</div>
<div class="tk" style="left:79.84px;top:499.4px"></div>
<div class="lb" style="left:86.84px;top:494.7px">-24</div>
<div class="tk" style="left:79.84px;top:526.8px"></div>
<div class="lb" style="left:86.84px;top:522.1px">-40</div>
<div class="tk" style="left:79.84px;top:560.4px"></div>
<div class="lb" style="left:86.84px;top:555.7px">-60</div>
<div class="hd" style="left:76.14px;top:448.1px"><i></i></div>
<div class="nm" style="left:62.34px;top:577.3px"><span>Chan 18</span></div>
<div class="st" style="left:114.73px;top:365.3px"></div>
<div class="sel" style="left:117.48px;top:367.5px"><span>no input</span><svg class="car" width="4.6" height="2.6" viewBox="0 0 4.6 2.6"><path d="M0 0.1H4.6L2.3 2.5Z" fill="#fff"/></svg></div>
<div class="ms" style="left:117.73px;top:386px">M</div>
<div class="ms" style="left:141.93px;top:386px;width:21px">S</div>
<div class="kn" style="left:117.28px;top:403.7px"><i></i></div>
<div class="v0" style="left:137.73px;top:406.7px">0</div>
<div class="mt" style="left:122.33px;top:423.8px"></div>
<div class="vv" style="left:130.98px;top:426.1px">0.0</div>
<div class="tb" style="left:136.43px;top:472.5px;height:89px"></div>
<div class="tk" style="left:134.93px;top:449.4px"></div>
<div class="lb" style="left:141.93px;top:444.7px">6</div>
<div class="tk" style="left:134.93px;top:459.7px"></div>
<div class="lb" style="left:141.93px;top:455px">0</div>
<div class="tk" style="left:134.93px;top:469.6px"></div>
<div class="lb" style="left:141.93px;top:464.9px">-6</div>
<div class="tk" style="left:134.93px;top:479.6px"></div>
<div class="lb" style="left:141.93px;top:474.9px">-12</div>
<div class="tk" style="left:134.93px;top:499.4px"></div>
<div class="lb" style="left:141.93px;top:494.7px">-24</div>
<div class="tk" style="left:134.93px;top:526.8px"></div>
<div class="lb" style="left:141.93px;top:522.1px">-40</div>
<div class="tk" style="left:134.93px;top:560.4px"></div>
<div class="lb" style="left:141.93px;top:555.7px">-60</div>
<div class="hd" style="left:131.23px;top:448.1px"><i></i></div>
<div class="nm" style="left:117.43px;top:577.3px"><span>Chan 19</span></div>
<div class="st" style="left:169.82px;top:365.3px"></div>
<div class="sel" style="left:172.57px;top:367.5px"><span>no input</span><svg class="car" width="4.6" height="2.6" viewBox="0 0 4.6 2.6"><path d="M0 0.1H4.6L2.3 2.5Z" fill="#fff"/></svg></div>
<div class="ms" style="left:172.82px;top:386px">M</div>
<div class="ms" style="left:197.02px;top:386px;width:21px">S</div>
<div class="kn" style="left:172.37px;top:403.7px"><i></i></div>
<div class="v0" style="left:192.82px;top:406.7px">0</div>
<div class="mt" style="left:177.42px;top:423.8px"></div>
<div class="vv" style="left:186.07px;top:426.1px">0.0</div>
<div class="tb" style="left:191.52px;top:472.5px;height:89px"></div>
<div class="tk" style="left:190.02px;top:449.4px"></div>
<div class="lb" style="left:197.02px;top:444.7px">6</div>
<div class="tk" style="left:190.02px;top:459.7px"></div>
<div class="lb" style="left:197.02px;top:455px">0</div>
<div class="tk" style="left:190.02px;top:469.6px"></div>
<div class="lb" style="left:197.02px;top:464.9px">-6</div>
<div class="tk" style="left:190.02px;top:479.6px"></div>
<div class="lb" style="left:197.02px;top:474.9px">-12</div>
<div class="tk" style="left:190.02px;top:499.4px"></div>
<div class="lb" style="left:197.02px;top:494.7px">-24</div>
<div class="tk" style="left:190.02px;top:526.8px"></div>
<div class="lb" style="left:197.02px;top:522.1px">-40</div>
<div class="tk" style="left:190.02px;top:560.4px"></div>
<div class="lb" style="left:197.02px;top:555.7px">-60</div>
<div class="hd" style="left:186.32px;top:448.1px"><i></i></div>
<div class="nm" style="left:172.52px;top:577.3px"><span>Chan 20</span></div>
<div class="st" style="left:224.91px;top:365.3px"></div>
<div class="sel" style="left:227.66px;top:367.5px"><span>no input</span><svg class="car" width="4.6" height="2.6" viewBox="0 0 4.6 2.6"><path d="M0 0.1H4.6L2.3 2.5Z" fill="#fff"/></svg></div>
<div class="ms" style="left:227.91px;top:386px">M</div>
<div class="ms" style="left:252.11px;top:386px;width:21px">S</div>
<div class="kn" style="left:227.46px;top:403.7px"><i></i></div>
<div class="v0" style="left:247.91px;top:406.7px">0</div>
<div class="mt" style="left:232.51px;top:423.8px"></div>
<div class="vv" style="left:241.16px;top:426.1px">0.0</div>
<div class="tb" style="left:246.61px;top:472.5px;height:89px"></div>
<div class="tk" style="left:245.11px;top:449.4px"></div>
<div class="lb" style="left:252.11px;top:444.7px">6</div>
<div class="tk" style="left:245.11px;top:459.7px"></div>
<div class="lb" style="left:252.11px;top:455px">0</div>
<div class="tk" style="left:245.11px;top:469.6px"></div>
<div class="lb" style="left:252.11px;top:464.9px">-6</div>
<div class="tk" style="left:245.11px;top:479.6px"></div>
<div class="lb" style="left:252.11px;top:474.9px">-12</div>
<div class="tk" style="left:245.11px;top:499.4px"></div>
<div class="lb" style="left:252.11px;top:494.7px">-24</div>
<div class="tk" style="left:245.11px;top:526.8px"></div>
<div class="lb" style="left:252.11px;top:522.1px">-40</div>
<div class="tk" style="left:245.11px;top:560.4px"></div>
<div class="lb" style="left:252.11px;top:555.7px">-60</div>
<div class="hd" style="left:241.41px;top:448.1px"><i></i></div>
<div class="nm" style="left:227.61px;top:577.3px"><span>Chan 21</span></div>
<div class="st" style="left:280px;top:365.3px"></div>
<div class="sel" style="left:282.75px;top:367.5px"><span>no input</span><svg class="car" width="4.6" height="2.6" viewBox="0 0 4.6 2.6"><path d="M0 0.1H4.6L2.3 2.5Z" fill="#fff"/></svg></div>
<div class="ms" style="left:283px;top:386px">M</div>
<div class="ms" style="left:307.2px;top:386px;width:21px">S</div>
<div class="kn" style="left:282.55px;top:403.7px"><i></i></div>
<div class="v0" style="left:303px;top:406.7px">0</div>
<div class="mt" style="left:287.6px;top:423.8px"></div>
<div class="vv" style="left:296.25px;top:426.1px">0.0</div>
<div class="tb" style="left:301.7px;top:472.5px;height:89px"></div>
<div class="tk" style="left:300.2px;top:449.4px"></div>
<div class="lb" style="left:307.2px;top:444.7px">6</div>
<div class="tk" style="left:300.2px;top:459.7px"></div>
<div class="lb" style="left:307.2px;top:455px">0</div>
<div class="tk" style="left:300.2px;top:469.6px"></div>
<div class="lb" style="left:307.2px;top:464.9px">-6</div>
<div class="tk" style="left:300.2px;top:479.6px"></div>
<div class="lb" style="left:307.2px;top:474.9px">-12</div>
<div class="tk" style="left:300.2px;top:499.4px"></div>
<div class="lb" style="left:307.2px;top:494.7px">-24</div>
<div class="tk" style="left:300.2px;top:526.8px"></div>
<div class="lb" style="left:307.2px;top:522.1px">-40</div>
<div class="tk" style="left:300.2px;top:560.4px"></div>
<div class="lb" style="left:307.2px;top:555.7px">-60</div>
<div class="hd" style="left:296.5px;top:448.1px"><i></i></div>
<div class="nm" style="left:282.7px;top:577.3px"><span>Chan 22</span></div>
<div class="st" style="left:335.09px;top:365.3px"></div>
<div class="sel" style="left:337.84px;top:367.5px"><span>no input</span><svg class="car" width="4.6" height="2.6" viewBox="0 0 4.6 2.6"><path d="M0 0.1H4.6L2.3 2.5Z" fill="#fff"/></svg></div>
<div class="ms" style="left:338.09px;top:386px">M</div>
<div class="ms" style="left:362.29px;top:386px;width:21px">S</div>
<div class="kn" style="left:337.64px;top:403.7px"><i></i></div>
<div class="v0" style="left:358.09px;top:406.7px">0</div>
<div class="mt" style="left:342.69px;top:423.8px"></div>
<div class="vv" style="left:351.34px;top:426.1px">0.0</div>
<div class="tb" style="left:356.79px;top:472.5px;height:89px"></div>
<div class="tk" style="left:355.29px;top:449.4px"></div>
<div class="lb" style="left:362.29px;top:444.7px">6</div>
<div class="tk" style="left:355.29px;top:459.7px"></div>
<div class="lb" style="left:362.29px;top:455px">0</div>
<div class="tk" style="left:355.29px;top:469.6px"></div>
<div class="lb" style="left:362.29px;top:464.9px">-6</div>
<div class="tk" style="left:355.29px;top:479.6px"></div>
<div class="lb" style="left:362.29px;top:474.9px">-12</div>
<div class="tk" style="left:355.29px;top:499.4px"></div>
<div class="lb" style="left:362.29px;top:494.7px">-24</div>
<div class="tk" style="left:355.29px;top:526.8px"></div>
<div class="lb" style="left:362.29px;top:522.1px">-40</div>
<div class="tk" style="left:355.29px;top:560.4px"></div>
<div class="lb" style="left:362.29px;top:555.7px">-60</div>
<div class="hd" style="left:351.59px;top:448.1px"><i></i></div>
<div class="nm" style="left:337.79px;top:577.3px"><span>Chan 23</span></div>
<div class="st" style="left:390.18px;top:365.3px"></div>
<div class="sel" style="left:392.93px;top:367.5px"><span>no input</span><svg class="car" width="4.6" height="2.6" viewBox="0 0 4.6 2.6"><path d="M0 0.1H4.6L2.3 2.5Z" fill="#fff"/></svg></div>
<div class="ms" style="left:393.18px;top:386px">M</div>
<div class="ms" style="left:417.38px;top:386px;width:21px">S</div>
<div class="kn" style="left:392.73px;top:403.7px"><i></i></div>
<div class="v0" style="left:413.18px;top:406.7px">0</div>
<div class="mt" style="left:397.78px;top:423.8px"></div>
<div class="vv" style="left:406.43px;top:426.1px">0.0</div>
<div class="tb" style="left:411.88px;top:472.5px;height:89px"></div>
<div class="tk" style="left:410.38px;top:449.4px"></div>
<div class="lb" style="left:417.38px;top:444.7px">6</div>
<div class="tk" style="left:410.38px;top:459.7px"></div>
<div class="lb" style="left:417.38px;top:455px">0</div>
<div class="tk" style="left:410.38px;top:469.6px"></div>
<div class="lb" style="left:417.38px;top:464.9px">-6</div>
<div class="tk" style="left:410.38px;top:479.6px"></div>
<div class="lb" style="left:417.38px;top:474.9px">-12</div>
<div class="tk" style="left:410.38px;top:499.4px"></div>
<div class="lb" style="left:417.38px;top:494.7px">-24</div>
<div class="tk" style="left:410.38px;top:526.8px"></div>
<div class="lb" style="left:417.38px;top:522.1px">-40</div>
<div class="tk" style="left:410.38px;top:560.4px"></div>
<div class="lb" style="left:417.38px;top:555.7px">-60</div>
<div class="hd" style="left:406.68px;top:448.1px"><i></i></div>
<div class="nm" style="left:392.88px;top:577.3px"><span>Chan 24</span></div>
<div class="st" style="left:445.27px;top:365.3px"></div>
<div class="sel" style="left:448.02px;top:367.5px"><span>no input</span><svg class="car" width="4.6" height="2.6" viewBox="0 0 4.6 2.6"><path d="M0 0.1H4.6L2.3 2.5Z" fill="#fff"/></svg></div>
<div class="ms" style="left:448.27px;top:386px">M</div>
<div class="ms" style="left:472.47px;top:386px;width:21px">S</div>
<div class="kn" style="left:447.82px;top:403.7px"><i></i></div>
<div class="v0" style="left:468.27px;top:406.7px">0</div>
<div class="mt" style="left:452.87px;top:423.8px"></div>
<div class="vv" style="left:461.52px;top:426.1px">0.0</div>
<div class="tb" style="left:466.97px;top:472.5px;height:89px"></div>
<div class="tk" style="left:465.47px;top:449.4px"></div>
<div class="lb" style="left:472.47px;top:444.7px">6</div>
<div class="tk" style="left:465.47px;top:459.7px"></div>
<div class="lb" style="left:472.47px;top:455px">0</div>
<div class="tk" style="left:465.47px;top:469.6px"></div>
<div class="lb" style="left:472.47px;top:464.9px">-6</div>
<div class="tk" style="left:465.47px;top:479.6px"></div>
<div class="lb" style="left:472.47px;top:474.9px">-12</div>
<div class="tk" style="left:465.47px;top:499.4px"></div>
<div class="lb" style="left:472.47px;top:494.7px">-24</div>
<div class="tk" style="left:465.47px;top:526.8px"></div>
<div class="lb" style="left:472.47px;top:522.1px">-40</div>
<div class="tk" style="left:465.47px;top:560.4px"></div>
<div class="lb" style="left:472.47px;top:555.7px">-60</div>
<div class="hd" style="left:461.77px;top:448.1px"><i></i></div>
<div class="nm" style="left:447.97px;top:577.3px"><span>Chan 25</span></div>
<div class="st" style="left:500.36px;top:365.3px"></div>
<div class="sel" style="left:503.11px;top:367.5px"><span>no input</span><svg class="car" width="4.6" height="2.6" viewBox="0 0 4.6 2.6"><path d="M0 0.1H4.6L2.3 2.5Z" fill="#fff"/></svg></div>
<div class="ms" style="left:503.36px;top:386px">M</div>
<div class="ms" style="left:527.56px;top:386px;width:21px">S</div>
<div class="kn" style="left:502.91px;top:403.7px"><i></i></div>
<div class="v0" style="left:523.36px;top:406.7px">0</div>
<div class="mt" style="left:507.96px;top:423.8px"></div>
<div class="vv" style="left:516.61px;top:426.1px">0.0</div>
<div class="tb" style="left:522.06px;top:472.5px;height:89px"></div>
<div class="tk" style="left:520.56px;top:449.4px"></div>
<div class="lb" style="left:527.56px;top:444.7px">6</div>
<div class="tk" style="left:520.56px;top:459.7px"></div>
<div class="lb" style="left:527.56px;top:455px">0</div>
<div class="tk" style="left:520.56px;top:469.6px"></div>
<div class="lb" style="left:527.56px;top:464.9px">-6</div>
<div class="tk" style="left:520.56px;top:479.6px"></div>
<div class="lb" style="left:527.56px;top:474.9px">-12</div>
<div class="tk" style="left:520.56px;top:499.4px"></div>
<div class="lb" style="left:527.56px;top:494.7px">-24</div>
<div class="tk" style="left:520.56px;top:526.8px"></div>
<div class="lb" style="left:527.56px;top:522.1px">-40</div>
<div class="tk" style="left:520.56px;top:560.4px"></div>
<div class="lb" style="left:527.56px;top:555.7px">-60</div>
<div class="hd" style="left:516.86px;top:448.1px"><i></i></div>
<div class="nm" style="left:503.06px;top:577.3px"><span>Chan 26</span></div>
<div class="st" style="left:555.45px;top:365.3px"></div>
<div class="sel" style="left:558.2px;top:367.5px"><span>no input</span><svg class="car" width="4.6" height="2.6" viewBox="0 0 4.6 2.6"><path d="M0 0.1H4.6L2.3 2.5Z" fill="#fff"/></svg></div>
<div class="ms" style="left:558.45px;top:386px">M</div>
<div class="ms" style="left:582.65px;top:386px;width:21px">S</div>
<div class="kn" style="left:558px;top:403.7px"><i></i></div>
<div class="v0" style="left:578.45px;top:406.7px">0</div>
<div class="mt" style="left:563.05px;top:423.8px"></div>
<div class="vv" style="left:571.7px;top:426.1px">0.0</div>
<div class="tb" style="left:577.15px;top:472.5px;height:89px"></div>
<div class="tk" style="left:575.65px;top:449.4px"></div>
<div class="lb" style="left:582.65px;top:444.7px">6</div>
<div class="tk" style="left:575.65px;top:459.7px"></div>
<div class="lb" style="left:582.65px;top:455px">0</div>
<div class="tk" style="left:575.65px;top:469.6px"></div>
<div class="lb" style="left:582.65px;top:464.9px">-6</div>
<div class="tk" style="left:575.65px;top:479.6px"></div>
<div class="lb" style="left:582.65px;top:474.9px">-12</div>
<div class="tk" style="left:575.65px;top:499.4px"></div>
<div class="lb" style="left:582.65px;top:494.7px">-24</div>
<div class="tk" style="left:575.65px;top:526.8px"></div>
<div class="lb" style="left:582.65px;top:522.1px">-40</div>
<div class="tk" style="left:575.65px;top:560.4px"></div>
<div class="lb" style="left:582.65px;top:555.7px">-60</div>
<div class="hd" style="left:571.95px;top:448.1px"><i></i></div>
<div class="nm" style="left:558.15px;top:577.3px"><span>Chan 27</span></div>
<div class="st" style="left:610.54px;top:365.3px"></div>
<div class="sel" style="left:613.29px;top:367.5px"><span>no input</span><svg class="car" width="4.6" height="2.6" viewBox="0 0 4.6 2.6"><path d="M0 0.1H4.6L2.3 2.5Z" fill="#fff"/></svg></div>
<div class="ms" style="left:613.54px;top:386px">M</div>
<div class="ms" style="left:637.74px;top:386px;width:21px">S</div>
<div class="kn" style="left:613.09px;top:403.7px"><i></i></div>
<div class="v0" style="left:633.54px;top:406.7px">0</div>
<div class="mt" style="left:618.14px;top:423.8px"></div>
<div class="vv" style="left:626.79px;top:426.1px">0.0</div>
<div class="tb" style="left:632.24px;top:472.5px;height:89px"></div>
<div class="tk" style="left:630.74px;top:449.4px"></div>
<div class="lb" style="left:637.74px;top:444.7px">6</div>
<div class="tk" style="left:630.74px;top:459.7px"></div>
<div class="lb" style="left:637.74px;top:455px">0</div>
<div class="tk" style="left:630.74px;top:469.6px"></div>
<div class="lb" style="left:637.74px;top:464.9px">-6</div>
<div class="tk" style="left:630.74px;top:479.6px"></div>
<div class="lb" style="left:637.74px;top:474.9px">-12</div>
<div class="tk" style="left:630.74px;top:499.4px"></div>
<div class="lb" style="left:637.74px;top:494.7px">-24</div>
<div class="tk" style="left:630.74px;top:526.8px"></div>
<div class="lb" style="left:637.74px;top:522.1px">-40</div>
<div class="tk" style="left:630.74px;top:560.4px"></div>
<div class="lb" style="left:637.74px;top:555.7px">-60</div>
<div class="hd" style="left:627.04px;top:448.1px"><i></i></div>
<div class="nm" style="left:613.24px;top:577.3px"><span>Chan 28</span></div>
<div class="st" style="left:665.63px;top:365.3px"></div>
<div class="sel" style="left:668.38px;top:367.5px"><span>no input</span><svg class="car" width="4.6" height="2.6" viewBox="0 0 4.6 2.6"><path d="M0 0.1H4.6L2.3 2.5Z" fill="#fff"/></svg></div>
<div class="ms" style="left:668.63px;top:386px">M</div>
<div class="ms" style="left:692.83px;top:386px;width:21px">S</div>
<div class="kn" style="left:668.18px;top:403.7px"><i></i></div>
<div class="v0" style="left:688.63px;top:406.7px">0</div>
<div class="mt" style="left:673.23px;top:423.8px"></div>
<div class="vv" style="left:681.88px;top:426.1px">0.0</div>
<div class="tb" style="left:687.33px;top:472.5px;height:89px"></div>
<div class="tk" style="left:685.83px;top:449.4px"></div>
<div class="lb" style="left:692.83px;top:444.7px">6</div>
<div class="tk" style="left:685.83px;top:459.7px"></div>
<div class="lb" style="left:692.83px;top:455px">0</div>
<div class="tk" style="left:685.83px;top:469.6px"></div>
<div class="lb" style="left:692.83px;top:464.9px">-6</div>
<div class="tk" style="left:685.83px;top:479.6px"></div>
<div class="lb" style="left:692.83px;top:474.9px">-12</div>
<div class="tk" style="left:685.83px;top:499.4px"></div>
<div class="lb" style="left:692.83px;top:494.7px">-24</div>
<div class="tk" style="left:685.83px;top:526.8px"></div>
<div class="lb" style="left:692.83px;top:522.1px">-40</div>
<div class="tk" style="left:685.83px;top:560.4px"></div>
<div class="lb" style="left:692.83px;top:555.7px">-60</div>
<div class="hd" style="left:682.13px;top:448.1px"><i></i></div>
<div class="nm" style="left:668.33px;top:577.3px"><span>Chan 29</span></div>
<div class="st" style="left:720.72px;top:365.3px"></div>
<div class="sel" style="left:723.47px;top:367.5px"><span>no input</span><svg class="car" width="4.6" height="2.6" viewBox="0 0 4.6 2.6"><path d="M0 0.1H4.6L2.3 2.5Z" fill="#fff"/></svg></div>
<div class="ms" style="left:723.72px;top:386px">M</div>
<div class="ms" style="left:747.92px;top:386px;width:21px">S</div>
<div class="kn" style="left:723.27px;top:403.7px"><i></i></div>
<div class="v0" style="left:743.72px;top:406.7px">0</div>
<div class="mt" style="left:728.32px;top:423.8px"></div>
<div class="vv" style="left:736.97px;top:426.1px">0.0</div>
<div class="tb" style="left:742.42px;top:472.5px;height:89px"></div>
<div class="tk" style="left:740.92px;top:449.4px"></div>
<div class="lb" style="left:747.92px;top:444.7px">6</div>
<div class="tk" style="left:740.92px;top:459.7px"></div>
<div class="lb" style="left:747.92px;top:455px">0</div>
<div class="tk" style="left:740.92px;top:469.6px"></div>
<div class="lb" style="left:747.92px;top:464.9px">-6</div>
<div class="tk" style="left:740.92px;top:479.6px"></div>
<div class="lb" style="left:747.92px;top:474.9px">-12</div>
<div class="tk" style="left:740.92px;top:499.4px"></div>
<div class="lb" style="left:747.92px;top:494.7px">-24</div>
<div class="tk" style="left:740.92px;top:526.8px"></div>
<div class="lb" style="left:747.92px;top:522.1px">-40</div>
<div class="tk" style="left:740.92px;top:560.4px"></div>
<div class="lb" style="left:747.92px;top:555.7px">-60</div>
<div class="hd" style="left:737.22px;top:448.1px"><i></i></div>
<div class="nm" style="left:723.42px;top:577.3px"><span>Chan 30</span></div>
<div class="st" style="left:775.81px;top:365.3px"></div>
<div class="sel" style="left:778.56px;top:367.5px"><span>no input</span><svg class="car" width="4.6" height="2.6" viewBox="0 0 4.6 2.6"><path d="M0 0.1H4.6L2.3 2.5Z" fill="#fff"/></svg></div>
<div class="ms" style="left:778.81px;top:386px">M</div>
<div class="ms" style="left:803.01px;top:386px;width:21px">S</div>
<div class="kn" style="left:778.36px;top:403.7px"><i></i></div>
<div class="v0" style="left:798.81px;top:406.7px">0</div>
<div class="mt" style="left:783.41px;top:423.8px"></div>
<div class="vv" style="left:792.06px;top:426.1px">0.0</div>
<div class="tb" style="left:797.51px;top:472.5px;height:89px"></div>
<div class="tk" style="left:796.01px;top:449.4px"></div>
<div class="lb" style="left:803.01px;top:444.7px">6</div>
<div class="tk" style="left:796.01px;top:459.7px"></div>
<div class="lb" style="left:803.01px;top:455px">0</div>
<div class="tk" style="left:796.01px;top:469.6px"></div>
<div class="lb" style="left:803.01px;top:464.9px">-6</div>
<div class="tk" style="left:796.01px;top:479.6px"></div>
<div class="lb" style="left:803.01px;top:474.9px">-12</div>
<div class="tk" style="left:796.01px;top:499.4px"></div>
<div class="lb" style="left:803.01px;top:494.7px">-24</div>
<div class="tk" style="left:796.01px;top:526.8px"></div>
<div class="lb" style="left:803.01px;top:522.1px">-40</div>
<div class="tk" style="left:796.01px;top:560.4px"></div>
<div class="lb" style="left:803.01px;top:555.7px">-60</div>
<div class="hd" style="left:792.31px;top:448.1px"><i></i></div>
<div class="nm" style="left:778.51px;top:577.3px"><span>Chan 31</span></div>
<div class="st" style="left:830.9px;top:365.3px"></div>
<div class="sel" style="left:833.65px;top:367.5px"><span>no input</span><svg class="car" width="4.6" height="2.6" viewBox="0 0 4.6 2.6"><path d="M0 0.1H4.6L2.3 2.5Z" fill="#fff"/></svg></div>
<div class="ms" style="left:833.9px;top:386px">M</div>
<div class="ms" style="left:858.1px;top:386px;width:21px">S</div>
<div class="kn" style="left:833.45px;top:403.7px"><i></i></div>
<div class="v0" style="left:853.9px;top:406.7px">0</div>
<div class="mt" style="left:838.5px;top:423.8px"></div>
<div class="vv" style="left:847.15px;top:426.1px">0.0</div>
<div class="tb" style="left:852.6px;top:472.5px;height:89px"></div>
<div class="tk" style="left:851.1px;top:449.4px"></div>
<div class="lb" style="left:858.1px;top:444.7px">6</div>
<div class="tk" style="left:851.1px;top:459.7px"></div>
<div class="lb" style="left:858.1px;top:455px">0</div>
<div class="tk" style="left:851.1px;top:469.6px"></div>
<div class="lb" style="left:858.1px;top:464.9px">-6</div>
<div class="tk" style="left:851.1px;top:479.6px"></div>
<div class="lb" style="left:858.1px;top:474.9px">-12</div>
<div class="tk" style="left:851.1px;top:499.4px"></div>
<div class="lb" style="left:858.1px;top:494.7px">-24</div>
<div class="tk" style="left:851.1px;top:526.8px"></div>
<div class="lb" style="left:858.1px;top:522.1px">-40</div>
<div class="tk" style="left:851.1px;top:560.4px"></div>
<div class="lb" style="left:858.1px;top:555.7px">-60</div>
<div class="hd" style="left:847.4px;top:448.1px"><i></i></div>
<div class="nm" style="left:833.6px;top:577.3px"><span>Chan 32</span></div>
<div class="st" style="left:930.4px;top:127.3px;width:76.3px;height:228.9px"></div>
<div class="otl">Output</div>
<div class="mt" style="left:944.7px;top:145.4px;height:189.5px;width:4.7px"></div>
<div class="mt" style="left:952.8px;top:145.4px;height:189.5px;width:4.7px"></div>
<div class="ms" style="left:968.2px;top:145.4px;width:24.9px;height:13.2px">M</div>
<div class="vv" style="left:966px;top:163.5px">0.0</div>
<div class="tb" style="left:971px;top:212.2px;height:111.3px"></div>
<div class="tk" style="left:969.5px;top:187px"></div>
<div class="lb" style="left:976.5px;top:182.3px">6</div>
<div class="tk" style="left:969.5px;top:199.4px"></div>
<div class="lb" style="left:976.5px;top:194.7px">0</div>
<div class="tk" style="left:969.5px;top:211.4px"></div>
<div class="lb" style="left:976.5px;top:206.7px">-6</div>
<div class="tk" style="left:969.5px;top:223.4px"></div>
<div class="lb" style="left:976.5px;top:218.7px">-12</div>
<div class="tk" style="left:969.5px;top:248.7px"></div>
<div class="lb" style="left:976.5px;top:244px">-24</div>
<div class="tk" style="left:969.5px;top:281.4px"></div>
<div class="lb" style="left:976.5px;top:276.7px">-40</div>
<div class="tk" style="left:969.5px;top:322.4px"></div>
<div class="lb" style="left:976.5px;top:317.7px">-60</div>
<div class="hd" style="left:965.8px;top:187.8px"><i></i></div>
<div class="nm" style="left:933.5px;top:339.3px;width:70.5px"><span>Stereo</span></div>
<div class="st" style="left:930.5px;top:365.2px;width:76.3px;height:48.2px"></div>
<div class="rt" style="left:933.5px;top:369.1px">left</div>
<div class="rt" style="left:933.5px;top:382.7px">no route</div>
<div class="sel" style="left:933.2px;top:396.2px;width:70.9px"><span style="transform:scaleX(0.95)">add</span><svg class="car" width="4.6" height="2.6" viewBox="0 0 4.6 2.6"><path d="M0 0.1H4.6L2.3 2.5Z" fill="#fff"/></svg></div>
<div class="st" style="left:930.5px;top:421.3px;width:76.3px;height:48.2px"></div>
<div class="rt" style="left:933.5px;top:425.2px">right</div>
<div class="rt" style="left:933.5px;top:438.8px">no route</div>
<div class="sel" style="left:933.2px;top:452.3px;width:70.9px"><span style="transform:scaleX(0.95)">add</span><svg class="car" width="4.6" height="2.6" viewBox="0 0 4.6 2.6"><path d="M0 0.1H4.6L2.3 2.5Z" fill="#fff"/></svg></div>
<!-- scrollbars -->
<div class="a" style="left:1010.9px;top:97.4px;width:12.1px;height:513.5px;background:#f1f1f1"></div>
<svg class="a" style="left:1014px;top:102.5px" width="7" height="4" viewBox="0 0 7 4"><path d="M3.5 0.3L6.8 3.6H0.2Z" fill="#a3a3a3"/></svg>
<svg class="a" style="left:1014px;top:602.5px" width="7" height="4" viewBox="0 0 7 4"><path d="M3.5 3.7L6.8 0.4H0.2Z" fill="#a3a3a3"/></svg>
<div class="a" style="left:1px;top:610.7px;width:1010px;height:13.3px;background:#f1f1f1"></div>
<div class="a" style="left:1010.9px;top:610.7px;width:12.1px;height:13.3px;background:#dcdcdc"></div>
<svg class="a" style="left:4.5px;top:613.5px" width="4" height="7" viewBox="0 0 4 7"><path d="M0.3 3.5L3.6 0.2V6.8Z" fill="#a3a3a3"/></svg>
<svg class="a" style="left:1003.5px;top:613.5px" width="4" height="7" viewBox="0 0 4 7"><path d="M3.7 3.5L0.4 0.2V6.8Z" fill="#a3a3a3"/></svg>
<!-- footer -->
<div class="ft" style="left:8.5px">fs: 44.1 kHz</div>
<div class="ft" style="left:47.2px">clk: SPDIF</div>
<div class="ft" style="left:81.8px">Workflow: default</div>
<div class="btn" style="left:909px;width:28.2px;background:#26b34a">Save</div>
<div class="btn" style="left:941.8px;width:35.4px;background:#26b34a">Save as</div>
<div class="btn" style="left:981.7px;width:33.9px;background:#e12b2b">Revert</div>
<div class="edge" style="left:0;background:linear-gradient(#62b5b3 0,#62b5b3 56px,#3c8081 56px)"></div>
<div class="edge" style="left:1023px;background:linear-gradient(#7fcfc8 0,#7fcfc8 56px,#45a09b 56px,#45a09b 97px,#7fcbc4 97px,#7fcbc4 624px,#45a09b 624px)"></div>
</body></html>
